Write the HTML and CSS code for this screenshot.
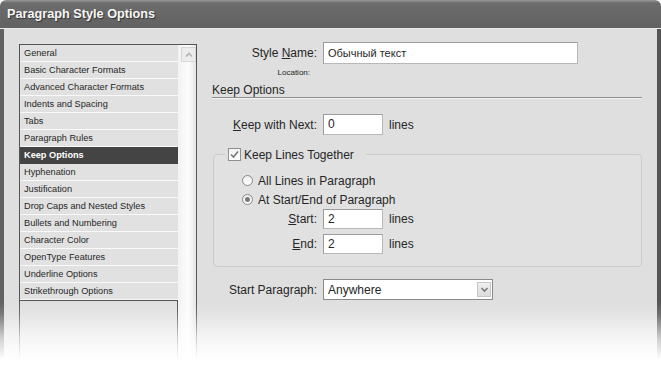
FILE: index.html
```html
<!DOCTYPE html>
<html lang="en">
<head>
    <meta charset="UTF-8">
    <title>Paragraph Style Options</title>
    <link rel="stylesheet" href="styles.css">
</head>
<body>

    <div class="window">
        <div class="titlebar">Paragraph Style Options</div>

        <div class="content">
            <!-- Category list -->
            <div class="sidebar">
                <div class="nav">
                    <ul class="nav-list">
                        <li>General</li>
                        <li>Basic Character Formats</li>
                        <li>Advanced Character Formats</li>
                        <li>Indents and Spacing</li>
                        <li>Tabs</li>
                        <li>Paragraph Rules</li>
                        <li class="active">Keep Options</li>
                        <li>Hyphenation</li>
                        <li>Justification</li>
                        <li>Drop Caps and Nested Styles</li>
                        <li>Bullets and Numbering</li>
                        <li>Character Color</li>
                        <li>OpenType Features</li>
                        <li>Underline Options</li>
                        <li>Strikethrough Options</li>
                    </ul>
                    <div class="nav-empty"></div>
                </div>
                <div class="scrollbar">
                    <span class="scroll-up">
                        <svg width="12" height="12" viewBox="0 0 12 12"><path d="M3 7.5 L6 4.5 L9 7.5" fill="none" stroke="#b4b4b4" stroke-width="1.6"/></svg>
                    </span>
                </div>
            </div>

            <!-- Options panel -->
            <div class="panel">
                <div class="field-row">
                    <label class="field-label">Style <u>N</u>ame:</label>
                    <div class="text-input wide">Обычный текст</div>
                </div>
                <div class="location">Location:</div>

                <div class="section-title">Keep Options</div>

                <div class="field-row keep-next">
                    <label class="field-label"><u>K</u>eep with Next:</label>
                    <div class="text-input small">0</div>
                    <span class="unit">lines</span>
                </div>

                <fieldset class="group">
                    <legend>
                        <span class="checkbox">
                            <svg width="9" height="9" viewBox="0 0 9 9"><path d="M1 4.5 L3.5 7 L8 1.5" fill="none" stroke="#777" stroke-width="1.6"/></svg>
                        </span>
                        Keep Lines Together
                    </legend>

                    <div class="radio-row first"><span class="radio"></span>All Lines in Paragraph</div>
                    <div class="radio-row"><span class="radio checked"></span>At Start/End of Paragraph</div>

                    <div class="field-row sub-row">
                        <label class="field-label short"><u>S</u>tart:</label>
                        <div class="text-input small">2</div>
                        <span class="unit">lines</span>
                    </div>
                    <div class="field-row sub-row end-row">
                        <label class="field-label short"><u>E</u>nd:</label>
                        <div class="text-input small">2</div>
                        <span class="unit">lines</span>
                    </div>
                </fieldset>

                <div class="field-row start-para">
                    <label class="field-label">Start Para<u>g</u>raph:</label>
                    <div class="select">
                        <span>Anywhere</span>
                        <span class="select-btn">
                            <svg width="11" height="11" viewBox="0 0 11 11"><path d="M2.5 4 L5.5 7 L8.5 4" fill="none" stroke="#7a7a7a" stroke-width="1.6"/></svg>
                        </span>
                    </div>
                </div>
            </div>
        </div>

        <div class="fade"></div>
    </div>

</body>
</html>
```

FILE: styles.css
```css
body {
    margin: 0;
    padding: 0;
    background-color: #fff;
    font-family: 'Liberation Sans', Arial, sans-serif;
    color: #262626;
}

.window {
    position: relative;
    width: 661px;
    height: 376px;
    overflow: hidden;
    border-radius: 6px 6px 0 0;
    display: flex;
    flex-direction: column;
}

.titlebar {
    height: 28px;
    line-height: 28px;
    padding-left: 7px;
    font-size: 12.7px;
    font-weight: bold;
    color: #f6f6f6;
    text-shadow: 1px 1px 1px #333;
    background: linear-gradient(#959595 0, #8a8a8a 1px, #6c6c6c 3px, #626262 27px);
    border-bottom: 1px solid #ececec;
}

.content {
    flex: 1;
    display: flex;
    background-color: #dfdfdf;
    border-left: 4px solid #626262;
    border-right: 4px solid #555;
    padding-left: 15px;
}

/* category list */
.sidebar {
    width: 178px;
    margin-top: 15px;
    height: 340px;
    box-sizing: border-box;
    border: 1px solid #555;
    display: flex;
}

.nav {
    width: 158px;
    display: flex;
    flex-direction: column;
}

.nav-list {
    list-style: none;
    margin: 0;
    padding: 0;
}

.nav-list li {
    height: 16px;
    line-height: 16px;
    padding-left: 4px;
    font-size: 9.2px;
    background-color: #e1e1e1;
    border-bottom: 1px solid #f9f9f9;
    white-space: nowrap;
}

.nav-list li.active {
    background-color: #444;
    color: #fff;
    font-weight: bold;
    border-bottom-color: #444;
}

.nav-empty {
    flex: 1;
    border-top: 1px solid #555;
    border-right: 1px solid #555;
    background-color: #e0e0e0;
}

.scrollbar {
    flex: 1;
    background: linear-gradient(to right, #f2f2f2, #fdfdfd 55%, #e6e6e6);
}

.scroll-up {
    display: flex;
    align-items: center;
    justify-content: center;
    width: 13px;
    height: 13px;
    margin: 2px 0 0 3px;
    background-color: #ececec;
    border: 1px solid #d6d6d6;
}

/* options panel */
.panel {
    margin-left: 15px;
    padding-top: 13px;
    font-size: 12px;
    display: flex;
    flex-direction: column;
}

.field-row {
    display: flex;
    align-items: center;
}

.field-label {
    width: 111px;
    box-sizing: border-box;
    padding-right: 6px;
    text-align: right;
}

.field-label.short {
    width: 98px;
}

.text-input {
    box-sizing: border-box;
    height: 22px;
    line-height: 20px;
    padding-left: 4px;
    background-color: #fff;
    border: 1px solid #9c9c9c;
    border-right-color: #b8b8b8;
    border-bottom-color: #b8b8b8;
}

.text-input.wide {
    width: 255px;
    font-size: 11px;
}

.text-input.small {
    width: 60px;
    height: 21px;
    line-height: 19px;
}

.unit {
    margin-left: 6px;
}

.location {
    width: 98px;
    margin-top: 4px;
    text-align: right;
    font-size: 8px;
    line-height: 10px;
}

.section-title {
    width: 430px;
    margin-top: 5px;
    line-height: 14px;
    border-bottom: 1px solid #8e8e8e;
    box-shadow: 0 1px 0 #f3f3f3;
}

.keep-next {
    margin-top: 16px;
}

.group {
    width: 429px;
    box-sizing: border-box;
    margin: 13px 0 0 1px;
    padding: 0 0 12px 11px;
    border: 1px solid #cbcbcb;
    border-radius: 4px;
    background-color: #e1e1e1;
}

.group legend {
    padding: 0 12px 0 3px;
    display: flex;
    align-items: center;
    height: 13px;
    background-color: #dfdfdf;
}

.checkbox {
    display: flex;
    align-items: center;
    justify-content: center;
    width: 11px;
    height: 11px;
    margin-right: 3px;
    border: 1px solid #8f8f8f;
    background: linear-gradient(#f2f2f2, #fff);
}

.radio-row {
    display: flex;
    align-items: center;
    height: 19px;
    margin-left: 17px;
}

.radio-row.first {
    margin-top: 10px;
}

.radio {
    width: 9px;
    height: 9px;
    margin-right: 5px;
    border: 1px solid #888;
    border-radius: 50%;
    background: linear-gradient(#ededed, #fff);
    display: flex;
    align-items: center;
    justify-content: center;
}

.radio.checked::after {
    content: '';
    width: 5px;
    height: 5px;
    border-radius: 50%;
    background-color: #7a7a7a;
}

.sub-row .text-input.small {
    height: 20px;
    line-height: 18px;
}

.end-row {
    margin-top: 5px;
}

.start-para {
    margin-top: 12px;
}

.select {
    width: 170px;
    height: 21px;
    box-sizing: border-box;
    display: flex;
    align-items: center;
    justify-content: space-between;
    padding: 0 1px 0 4px;
    background-color: #fff;
    border: 1px solid #8a8a8a;
}

.select-btn {
    width: 14px;
    height: 15px;
    display: flex;
    align-items: center;
    justify-content: center;
    background: linear-gradient(#efefef, #dcdcdc);
    border: 1px solid #c6c6c6;
    box-sizing: border-box;
}

/* reflection fade at the bottom of the shot */
.fade {
    position: absolute;
    left: 0;
    right: 0;
    top: 302px;
    bottom: 0;
    background: linear-gradient(rgba(255, 255, 255, 0) 0, rgba(255, 255, 255, 0.15) 12px, rgba(255, 255, 255, 0.7) 36px, #fff 58px);
}
```
